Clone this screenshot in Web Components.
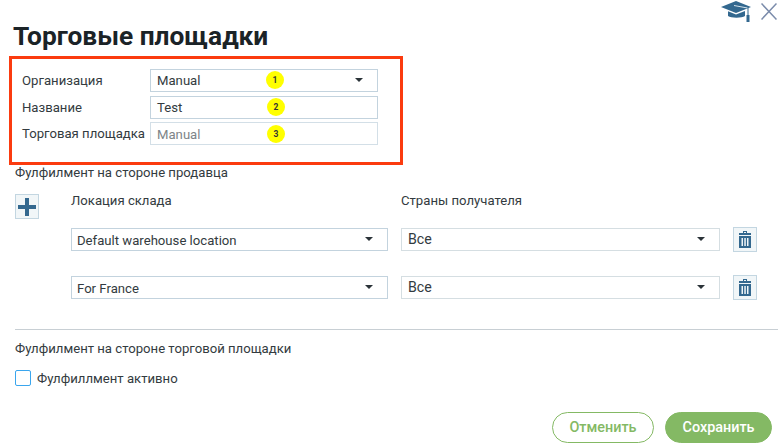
<!DOCTYPE html>
<html lang="ru">
<head>
<meta charset="utf-8">
<title>Торговые площадки</title>
<style>
  html, body { margin: 0; padding: 0; background: #fff; }
  body { font-family: Roboto, "Liberation Sans", sans-serif; font-size: 13.15px; color: #333b40; }
</style>
</head>
<body>
<mp-dialog>
  <mp-annotated slot="top">
    <mp-row label="Организация"><mp-field arrow marker="1" marker-left="115">Manual</mp-field></mp-row>
    <mp-row label="Название"><mp-field marker="2" marker-left="116">Test</mp-field></mp-row>
    <mp-row label="Торговая площадка" style="margin-top:-1px"><mp-field readonly marker="3" marker-left="116" marker-top="2">Manual</mp-field></mp-row>
  </mp-annotated>
  <mp-location-row slot="locations" location="Default warehouse location"></mp-location-row>
  <mp-location-row slot="locations" location="For France"></mp-location-row>
</mp-dialog>

<script>
class MpField extends HTMLElement {
  constructor() {
    super();
    this.attachShadow({ mode: 'open' });
    this.shadowRoot.innerHTML = `
      <style>
        :host {
          display: flex;
          align-items: center;
          position: relative;
          box-sizing: border-box;
          height: 23px;
          padding-left: 6px;
          font-size: 13.15px;
          color: #333b40;
          background: #fff;
          border: 1px solid #c3d3de;
        }
        :host([readonly]) { color: #7d8488; border-color: #d3dfe7; padding-top: 2px; }
        :host([plain]) { border-color: #d5dee2; font-size: 14.2px; padding-bottom: 2px; }
        :host([wide]) { padding-left: 5px; padding-top: 2px; }
        .arrow {
          position: absolute;
          right: 14px;
          top: 8px;
          width: 0;
          height: 0;
          border-left: 4px solid transparent;
          border-right: 4px solid transparent;
          border-top: 4px solid #2b3338;
        }
        .marker {
          position: absolute;
          top: 1px;
          width: 18px;
          height: 18px;
          line-height: 18px;
          text-align: center;
          font-size: 8.5px;
          font-weight: 700;
          color: #333;
          background: #ffff00;
          border-radius: 50%;
        }
      </style>
      <slot></slot>
    `;
  }

  connectedCallback() {
    if (this.hasAttribute('arrow')) {
      const arrow = document.createElement('span');
      arrow.className = 'arrow';
      this.shadowRoot.appendChild(arrow);
    }
    if (this.hasAttribute('marker')) {
      const marker = document.createElement('span');
      marker.className = 'marker';
      marker.textContent = this.getAttribute('marker');
      marker.style.left = this.getAttribute('marker-left') + 'px';
      if (this.hasAttribute('marker-top'))
        marker.style.top = this.getAttribute('marker-top') + 'px';
      this.shadowRoot.appendChild(marker);
    }
  }
}

class MpRow extends HTMLElement {
  constructor() {
    super();
    this.attachShadow({ mode: 'open' });
    this.shadowRoot.innerHTML = `
      <style>
        :host {
          display: grid;
          grid-template-columns: 128px 228px;
          align-items: center;
          font-size: 13.15px;
        }
        span { white-space: nowrap; }
      </style>
      <span></span><slot></slot>
    `;
  }

  connectedCallback() {
    this.shadowRoot.querySelector('span').textContent = this.getAttribute('label');
  }
}

class MpAnnotated extends HTMLElement {
  constructor() {
    super();
    this.attachShadow({ mode: 'open' });
    this.shadowRoot.innerHTML = `
      <style>
        :host {
          display: flex;
          flex-direction: column;
          gap: 4px;
          box-sizing: border-box;
          width: 394px;
          height: 109px;
          margin-left: 9px;
          padding: 10px 0 0 10px;
          border: 3px solid #fb3b0f;
        }
      </style>
      <slot></slot>
    `;
  }
}

class MpIconButton extends HTMLElement {
  constructor() {
    super();
    this.attachShadow({ mode: 'open' });
    const plus = `<svg width="18" height="18" viewBox="0 0 18 18"><path fill="#33688f" d="M7 0h4v7h7v4h-7v7H7v-7H0V7h7z"/></svg>`;
    const trash = `<svg width="12" height="17" viewBox="0 0 12 17"><path fill="#33688f" fill-rule="evenodd" d="M4 0h4v2h4v2H0V2h4zM5 1v1h2V1zM0 5h12v12H0zM2.500 7v8h1.500V7zM5.300 7v8h1.500V7zM8 7v8h1.500V7z"/></svg>`;
    this.shadowRoot.innerHTML = `
      <style>
        :host {
          display: flex;
          align-items: center;
          justify-content: center;
          box-sizing: border-box;
          width: 24px;
          height: 25px;
          background: #f1f6f8;
          border: 1px solid #c3d6e1;
        }
      </style>
      ${this.getAttribute('icon') === 'plus' ? plus : trash}
    `;
  }
}

class MpLocationRow extends HTMLElement {
  constructor() {
    super();
    this.attachShadow({ mode: 'open' });
    this.shadowRoot.innerHTML = `
      <style>
        :host {
          display: grid;
          grid-template-columns: 317px 319px 24px;
          column-gap: 13px;
          align-items: center;
          height: 25px;
        }
      </style>
      <mp-field arrow wide id="location"></mp-field>
      <mp-field arrow plain>Все</mp-field>
      <mp-icon-button icon="trash"></mp-icon-button>
    `;
  }

  connectedCallback() {
    this.shadowRoot.querySelector('#location').textContent = this.getAttribute('location');
  }
}

class MpDialog extends HTMLElement {
  constructor() {
    super();
    this.attachShadow({ mode: 'open' });
    this.shadowRoot.innerHTML = `
      <style>
        :host {
          display: block;
          box-sizing: border-box;
          width: 784px;
          height: 444px;
          overflow: hidden;
          position: relative;
          font-family: Roboto, "Liberation Sans", sans-serif;
          font-size: 13.15px;
          color: #333b40;
        }
        .tools {
          position: absolute;
          top: 1px;
          left: 721px;
          display: flex;
          gap: 10px;
        }
        h1 {
          margin: 0 0 0 13px;
          padding-top: 21px;
          height: 35px;
          font-size: 26.3px;
          line-height: 30px;
          font-weight: 700;
          color: #1b2327;
        }
        .seller { margin: 0 0 0 15px; line-height: 15px; }
        .fulfil {
          display: grid;
          grid-template-columns: 24px 1fr;
          column-gap: 32px;
          margin: 14px 0 0 15px;
        }
        .heads {
          display: grid;
          grid-template-columns: 330px auto;
          margin-top: -1px;
          line-height: 15px;
          height: 34px;
        }
        .rows { grid-column: 2; display: flex; flex-direction: column; gap: 23px; }
        hr {
          margin: 29px 6px 0 15px;
          border: 0;
          border-top: 1px solid #c8cfd4;
        }
        .market { margin: 11px 0 0 15px; line-height: 15px; }
        label {
          display: flex;
          align-items: center;
          gap: 6px;
          margin: 13px 0 0 15px;
        }
        label span:last-child { padding-top: 2px; }
        .box {
          box-sizing: border-box;
          width: 16px;
          height: 16px;
          border: 1px solid #3aa6ee;
          border-radius: 2px;
        }
        .actions {
          display: flex;
          justify-content: flex-end;
          gap: 11px;
          margin: 26px 12px 0 0;
        }
        .btn {
          box-sizing: border-box;
          height: 31px;
          line-height: 29px;
          text-align: center;
          font-size: 14.4px;
          font-weight: 500;
          border-radius: 16px;
          border: 1px solid #84b964;
        }
        .cancel { width: 102px; color: #84b964; background: #fff; }
        .save { width: 107px; color: #fff; background: #84b964; }
      </style>
      <div class="tools">
        <svg width="30" height="21" viewBox="0 0 30 21">
          <path fill="#33688f" d="M15 0 30 6 15 12 0 6z"/>
          <path fill="none" stroke="#d7e4ec" stroke-width="1" d="M13 4.500 26.500 7"/>
          <path fill="#33688f" d="M7 10.300 15 13.500 24 10v5c-3 2.300-14 2.300-17 0z"/>
          <path fill="none" stroke="#33688f" stroke-width="1" d="M27 7v7"/>
          <rect x="25.500" y="14" width="3" height="7" fill="#33688f"/>
        </svg>
        <svg width="16" height="17" viewBox="0 0 16 17" style="margin-top:2px">
          <path fill="none" stroke="#7b8cab" stroke-width="1.500" d="M.5.500l15 16M15.500.500l-15 16"/>
        </svg>
      </div>
      <h1>Торговые площадки</h1>
      <slot name="top"></slot>
      <div class="seller">Фулфилмент на стороне продавца</div>
      <div class="fulfil">
        <mp-icon-button icon="plus"></mp-icon-button>
        <div>
          <div class="heads"><span>Локация склада</span><span>Страны получателя</span></div>
          <div class="rows"><slot name="locations"></slot></div>
        </div>
      </div>
      <hr>
      <div class="market">Фулфилмент на стороне торговой площадки</div>
      <label><span class="box"></span><span>Фулфиллмент активно</span></label>
      <div class="actions">
        <div class="btn cancel">Отменить</div>
        <div class="btn save">Сохранить</div>
      </div>
    `;
  }
}

customElements.define('mp-field', MpField);
customElements.define('mp-row', MpRow);
customElements.define('mp-annotated', MpAnnotated);
customElements.define('mp-icon-button', MpIconButton);
customElements.define('mp-location-row', MpLocationRow);
customElements.define('mp-dialog', MpDialog);
</script>
</body>
</html>
